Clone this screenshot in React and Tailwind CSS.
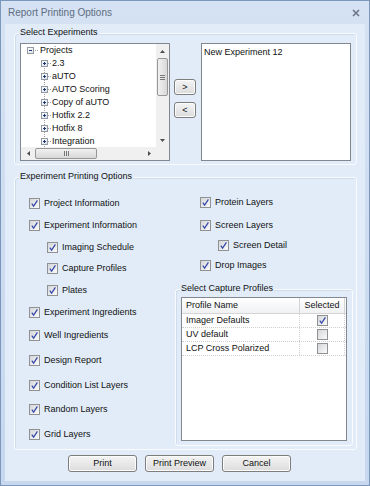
import React from 'react';

const font = { fontFamily: '"Liberation Sans", Arial, sans-serif' };

const projects = ['2.3', 'aUTO', 'AUTO Scoring', 'Copy of aUTO', 'Hotfix 2.2', 'Hotfix 8', 'Integration'];

const profiles = [
    { name: 'Imager Defaults', selected: true },
    { name: 'UV default', selected: false },
    { name: 'LCP Cross Polarized', selected: false },
];

function Check({ checked = true }) {
    return (
        <span className="flex h-[11px] w-[11px] shrink-0 items-center justify-center border border-[#8f9193] bg-gradient-to-br from-[#d4d6d9] to-[#fbfbfb]">
            {checked && (
                <svg width="9" height="9" viewBox="0 0 9 9">
                    <path d="M1.8 4.6 L3.6 7.2 L7.4 1.4" fill="none" stroke="#3346a8" strokeWidth="1.2" />
                </svg>
            )}
        </span>
    );
}

function Option({ label, indent = false, h = 'h-[22px]' }) {
    return (
        <div className={`flex items-center gap-[4px] ${h} ${indent ? 'pl-[18px]' : ''}`}>
            <Check />
            <span className="text-[9px] leading-none text-[#111]">{label}</span>
        </div>
    );
}

function Group({ title, className = '', children }) {
    return (
        <div className={`relative rounded-[3px] border border-[#f9fbfe] shadow-[inset_1px_1px_0_#cfdcec] ${className}`}>
            <span className="absolute -top-[8px] left-[4px] bg-[#e2ecf9] px-px text-[9px] leading-[12px] text-[#111]">{title}</span>
            {children}
        </div>
    );
}

function Btn({ children, className = '' }) {
    return (
        <button className={`flex items-center justify-center rounded-[3px] border border-[#7d7d7d] bg-gradient-to-b from-[#f4f4f4] to-[#dcdcdc] text-[9px] leading-none text-[#111] shadow-[inset_0_0_0_1px_#fcfcfc] ${className}`}>
            {children}
        </button>
    );
}

function Box({ plus }) {
    return (
        <span className="relative flex h-[7px] w-[7px] shrink-0 items-center justify-center border border-[#939aa3] bg-gradient-to-br from-white to-[#dde1e6]">
            <span className="absolute h-px w-[3px] bg-[#1f3a78]" />
            {plus && <span className="absolute h-[3px] w-px bg-[#1f3a78]" />}
        </span>
    );
}

function Arrow({ dir }) {
    const d = {
        up: 'M1 4 L3.5 1 L6 4 Z',
        down: 'M1 1 L3.5 4 L6 1 Z',
        left: 'M4 1 L1 3.5 L4 6 Z',
        right: 'M1 1 L4 3.5 L1 6 Z',
    }[dir];
    const size = dir === 'up' || dir === 'down' ? { w: 7, h: 5 } : { w: 5, h: 7 };
    return (
        <svg width={size.w} height={size.h} viewBox={`0 0 ${size.w} ${size.h}`}>
            <path d={d} fill="#4d4d4d" />
        </svg>
    );
}

function Tree() {
    return (
        <div className="h-[118px] w-[150px] border border-[#828790] bg-white">
            <div className="flex h-[103px]">
                <div className="relative flex-1 overflow-hidden">
                    <span className="absolute left-[23px] top-[17px] h-[86px] border-l border-dotted border-[#a0a0a0]" />
                    <div className="flex h-[13px] items-center pl-[6px]">
                        <Box />
                        <span className="ml-px w-[3px] border-t border-dotted border-[#a0a0a0]" />
                        <span className="ml-[2px] text-[9px] leading-none text-[#111]">Projects</span>
                    </div>
                    {projects.map((p) => (
                        <div key={p} className="relative flex h-[13px] items-center pl-[20px]">
                            <Box plus />
                            <span className="w-[3px] border-t border-dotted border-[#a0a0a0]" />
                            <span className="ml-px text-[9px] leading-none text-[#111]">{p}</span>
                        </div>
                    ))}
                </div>
                <div className="flex w-[13px] flex-col items-center bg-[#f0f0f0]">
                    <div className="flex h-[14px] items-center"><Arrow dir="up" /></div>
                    <div className="flex h-[38px] w-[11px] flex-col items-center justify-center gap-px rounded-[2px] border border-[#979797] bg-gradient-to-r from-[#f1f1f1] to-[#d8d8d8]">
                        <span className="h-px w-[5px] bg-[#777]" />
                        <span className="h-px w-[5px] bg-[#777]" />
                        <span className="h-px w-[5px] bg-[#777]" />
                    </div>
                    <div className="flex-1" />
                    <div className="flex h-[14px] items-center"><Arrow dir="down" /></div>
                </div>
            </div>
            <div className="flex h-[13px] bg-[#f0f0f0]">
                <div className="flex flex-1 items-center">
                    <div className="flex w-[14px] justify-center"><Arrow dir="left" /></div>
                    <div className="flex h-[11px] w-[62px] items-center justify-center gap-px rounded-[2px] border border-[#979797] bg-gradient-to-b from-[#f1f1f1] to-[#d8d8d8]">
                        <span className="h-[5px] w-px bg-[#777]" />
                        <span className="h-[5px] w-px bg-[#777]" />
                        <span className="h-[5px] w-px bg-[#777]" />
                    </div>
                    <div className="flex-1" />
                    <div className="flex w-[14px] justify-center"><Arrow dir="right" /></div>
                </div>
                <div className="w-[13px] bg-[#f0f0f0]" />
            </div>
        </div>
    );
}

function ProfilesTable() {
    return (
        <div className="h-[144px] w-[166px] border border-[#828790] bg-white">
            <div className="flex h-[16px] border-b border-[#d5d5d5] bg-gradient-to-b from-white to-[#f0f1f3] text-[9px] leading-none text-[#111]">
                <div className="flex w-[118px] items-center border-r border-[#d5d5d5] pl-[4px]">Profile Name</div>
                <div className="flex w-[45px] items-center justify-center border-r border-[#d5d5d5]">Selected</div>
            </div>
            {profiles.map((p) => (
                <div key={p.name} className="flex h-[14px] border-b border-dotted border-[#d0d0d0] text-[9px] leading-none text-[#111]">
                    <div className="flex w-[118px] items-center border-r border-dotted border-[#d0d0d0] pl-[4px]">{p.name}</div>
                    <div className="flex w-[45px] items-center justify-center border-r border-dotted border-[#d0d0d0]">
                        <Check checked={p.selected} />
                    </div>
                </div>
            ))}
        </div>
    );
}

export default function App() {
    return (
        <div className="h-[486px] w-[370px] bg-[#7b97bc] p-px" style={font}>
            <div className="flex h-full flex-col bg-gradient-to-b from-[#d5e2f3] to-[#c6d7ee]">
                <div className="flex h-[23px] shrink-0 items-center justify-between pl-[7px] pr-[9px]">
                    <span className="text-[10px] leading-none text-[#5d6c80]">Report Printing Options</span>
                    <svg width="8" height="8" viewBox="0 0 8 8">
                        <path d="M1 1 L7 7 M7 1 L1 7" stroke="#6c7888" strokeWidth="1.6" />
                    </svg>
                </div>
                <div className="mx-[4px] mb-[4px] flex-1 bg-[#e2ecf9] pl-[9px] pt-[9px]">
                    <Group title="Select Experiments" className="h-[132px] w-[343px]">
                        <div className="flex pl-[5px] pt-[9px]">
                            <Tree />
                            <div className="ml-[4px] flex flex-col gap-[7px] pt-[36px]">
                                <Btn className="h-[16px] w-[22px]">&gt;</Btn>
                                <Btn className="h-[16px] w-[22px]">&lt;</Btn>
                            </div>
                            <div className="ml-[5px] h-[118px] w-[150px] border border-[#828790] bg-white pl-[2px] pt-[2px] text-[9px] leading-[12px] text-[#111]">
                                New Experiment 12
                            </div>
                        </div>
                    </Group>

                    <Group title="Experiment Printing Options" className="mt-[12px] h-[273px] w-[343px]">
                        <div className="flex">
                            <div className="w-[160px] pl-[14px] pt-[14px]">
                                <Option label="Project Information" />
                                <Option label="Experiment Information" />
                                <Option label="Imaging Schedule" indent />
                                <Option label="Capture Profiles" indent h="h-[21px]" />
                                <Option label="Plates" indent />
                                <Option label="Experiment Ingredients" />
                                <Option label="Well Ingredients" h="h-[25px]" />
                                <Option label="Design Report" h="h-[25px]" />
                                <Option label="Condition List Layers" h="h-[24px]" />
                                <Option label="Random Layers" h="h-[25px]" />
                                <Option label="Grid Layers" h="h-[24px]" />
                            </div>
                            <div className="pt-[13px]">
                                <div className="pl-[25px]">
                                    <Option label="Protein Layers" />
                                    <div className="h-px" />
                                    <Option label="Screen Layers" />
                                    <Option label="Screen Detail" indent h="h-[19px]" />
                                    <Option label="Drop Images" h="h-[21px]" />
                                </div>
                                <Group title="Select Capture Profiles" className="mt-[13px] h-[157px] w-[178px]">
                                    <div className="pl-[5px] pt-[7px]">
                                        <ProfilesTable />
                                    </div>
                                </Group>
                            </div>
                        </div>
                    </Group>

                    <div className="mt-[5px] flex gap-[8px] pl-[54px]">
                        <Btn className="h-[17px] w-[69px]">Print</Btn>
                        <Btn className="h-[17px] w-[69px]">Print Preview</Btn>
                        <Btn className="h-[17px] w-[69px]">Cancel</Btn>
                    </div>
                </div>
            </div>
        </div>
    );
}
